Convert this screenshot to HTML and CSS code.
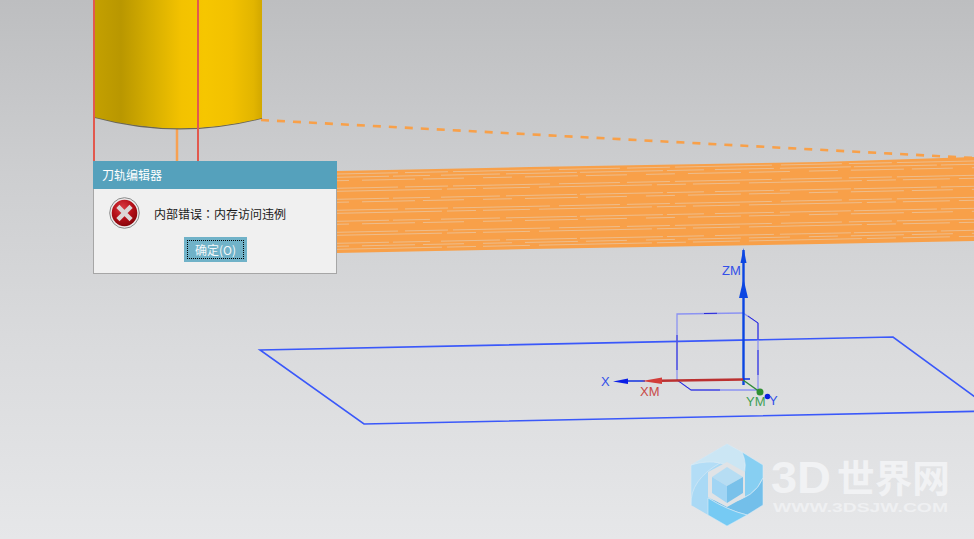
FILE: index.html
```html
<!DOCTYPE html>
<html lang="zh">
<head>
<meta charset="utf-8">
<title>刀轨编辑器</title>
<link rel="stylesheet" href="styles.css">
</head>
<body>
<main class="stage">
  <svg class="scene" width="974" height="539" viewBox="0 0 974 539" xmlns="http://www.w3.org/2000/svg">
    <defs>
      <linearGradient id="cyl" x1="94" x2="262" y1="0" y2="0" gradientUnits="userSpaceOnUse">
        <stop offset="0" stop-color="#c4a000"/>
        <stop offset="0.16" stop-color="#b99700"/>
        <stop offset="0.34" stop-color="#d6ae00"/>
        <stop offset="0.52" stop-color="#f3c200"/>
        <stop offset="0.66" stop-color="#f6c600"/>
        <stop offset="0.82" stop-color="#f2c100"/>
        <stop offset="0.95" stop-color="#e2b500"/>
        <stop offset="1" stop-color="#d2a800"/>
      </linearGradient>
    </defs>

    <!-- tool path band -->
    <polygon class="band" points="337,171 530,167 820,162 974,157 974,241 820,244 530,249 337,253"/>
    <path class="band-lines bl-a" d="M337 174L974 161M337 188.300L974 175.300M337 210.300L974 197.300M337 232.300L974 219.300"/>
    <path class="band-lines bl-b" d="M337 177.300L974 164.300M337 199.300L974 186.300M337 221.300L974 208.300M337 243.300L974 230.300"/>
    <path class="band-lines bl-c" d="M337 191.300L974 178.300M337 213.300L974 200.300M337 235.300L974 222.300M337 249.300L974 236.300"/>
    <path class="band-lines bl-d" d="M337 180.700L974 167.700M337 202.300L974 189.300M337 224.300L974 211.300M337 246.300L974 233.300"/>

    <!-- dashed tool path -->
    <line class="dash" x1="261" y1="120" x2="974" y2="158"/>
    <line class="lead" x1="177" y1="128" x2="177" y2="161"/>

    <!-- cutter -->
    <path class="cyl-shadow" d="M94 117Q178 140 262 118"/>
    <path class="cyl" d="M94 0H262V118Q178 139 94 117Z"/>
    <line class="edge" x1="94" y1="0" x2="94" y2="161"/>
    <line class="edge" x1="198" y1="0" x2="198" y2="161"/>

    <!-- work plane -->
    <polygon class="plane" points="260,350 893,337 994,411 364,424"/>

    <!-- MCS box -->
    <path class="box" d="M677 314L743 313L758 323V390H691L677 380V314Z"/>
    <path class="box-dark" d="M677 335V370M704 313.500L717 313.300M748 316L758 323V340M758 350V375M691 390H720M677 380L691 390"/>

    <!-- triad -->
    <line class="axis-z" x1="743.500" y1="385" x2="743.500" y2="250"/>
    <polygon class="head-z" points="743.500,248 746.500,263 740.500,263"/>
    <polygon class="head-z" points="743.500,279 748,298 739,298"/>
    <line class="axis-y" x1="743" y1="380" x2="760" y2="392"/>
    <line class="axis-x" x1="628" y1="381" x2="645" y2="381"/>
    <polygon class="head-x" points="613,381.500 628,378.500 628,384"/>
    <line class="axis-xm" x1="660" y1="380.700" x2="743" y2="379.500"/>
    <polygon class="head-xm" points="642,381 662,377.500 662,384"/>
    <path class="axis-tick" d="M743 379H750"/>
    <circle class="ball-g" cx="760" cy="392" r="3.500"/>
    <circle class="ball-b" cx="767.500" cy="396.500" r="2.800"/>
    <text class="lbl lbl-blue" x="722" y="275">ZM</text>
    <text class="lbl lbl-blue" x="601" y="386">X</text>
    <text class="lbl lbl-red" x="640" y="396">XM</text>
    <text class="lbl lbl-green" x="746" y="406">YM</text>
    <text class="lbl lbl-blue" x="769" y="405">Y</text>

    <!-- watermark logo -->
    <polygon class="lg-base" points="727,444 763,465 763,505 727,526 691,505 691,465"/>
    <path class="lg-blade lg-f" d="M691 465L691 505Q690 480 720 463Q705 458 691 465Z"/>
    <path class="lg-blade lg-a" d="M691 465L727 444L742 452Q748 465 743 477Q723 455 691 465Z"/>
    <path class="lg-blade lg-b" d="M742 452L763 465V478Q755 498 728 503L743 477Q748 465 742 452Z"/>
    <path class="lg-blade lg-c" d="M763 478V505L747 515Q727 510 708 498L728 503Q755 498 763 478Z"/>
    <path class="lg-blade lg-d" d="M708 498Q727 510 747 515L727 526L708 515Z"/>
    <polygon class="lg-ring" points="727,462 745,472 745,497 727,507 708,497 708,472"/>
    <polygon class="lg-c-top" points="727,467 743,477 727,486 712,477"/>
    <polygon class="lg-c-left" points="712,477 727,486 727,503 712,493"/>
    <polygon class="lg-c-right" points="743,477 743,493 727,503 727,486"/>
    <text class="lg-en" x="771" y="493" textLength="60" lengthAdjust="spacingAndGlyphs">3D</text>
    <text class="lg-cn" x="837" y="492" textLength="113" lengthAdjust="spacingAndGlyphs">世界网</text>
    <text class="lg-url" x="773" y="512" textLength="175" lengthAdjust="spacingAndGlyphs">WWW.3DSJW.COM</text>
  </svg>

  <section class="dialog">
    <header class="dialog-title">刀轨编辑器</header>
    <div class="dialog-body">
      <div class="dialog-msg">
        <svg class="err-icon" width="31" height="32" viewBox="0 0 31 32" xmlns="http://www.w3.org/2000/svg">
          <defs>
            <radialGradient id="err" cx="0.42" cy="0.3" r="0.8">
              <stop offset="0" stop-color="#d93a42"/>
              <stop offset="0.5" stop-color="#b40f18"/>
              <stop offset="1" stop-color="#7a0207"/>
            </radialGradient>
          </defs>
          <ellipse cx="15.500" cy="16" rx="14.800" ry="15.300" fill="#ececec" stroke="#8a8a8a" stroke-width="1"/>
          <ellipse cx="15.500" cy="16" rx="12.800" ry="13.200" fill="url(#err)"/>
          <path d="M10.500 11L20.500 21M20.500 11L10.500 21" stroke="#dcd6d6" stroke-width="4.500" stroke-linecap="square" fill="none"/>
        </svg>
        <p class="msg-text" lang="zh-TW">内部错误：内存访问违例</p>
      </div>
      <div class="dialog-actions">
        <button class="ok-btn" type="button"><span class="ok-inner">确定(O)</span></button>
      </div>
    </div>
  </section>
</main>
</body>
</html>
```

FILE: styles.css
```css
html, body {
  margin: 0;
  padding: 0;
}

body {
  width: 974px;
  height: 539px;
  overflow: hidden;
  font-family: "Noto Sans CJK SC", "Liberation Sans", sans-serif;
}

.stage {
  position: relative;
  width: 974px;
  height: 539px;
  background: linear-gradient(180deg, #bdbec0 0%, #cdced0 32%, #d9dadc 62%, #e6e7e9 100%);
  overflow: hidden;
}

.scene {
  display: block;
}

/* band */
.band { fill: #f8a049; }
.band-lines {
  fill: none;
  stroke: #e6d0ba;
  stroke-width: 0.900;
  opacity: 0.65;
}
.bl-a { stroke-dasharray: 61 7 43 5 97 9; }
.bl-b { stroke-dasharray: 83 4 37 11 59 6 71 3; stroke-dashoffset: 31; }
.bl-c { stroke-dasharray: 47 9 113 5 29 7; stroke-dashoffset: 64; }
.bl-d { stroke-dasharray: 29 13 53 8 41 19; stroke-dashoffset: 17; }
.dash {
  stroke: #f8a049;
  stroke-width: 2.600;
  stroke-dasharray: 8 8;
}
.lead { stroke: #f7a152; stroke-width: 2.500; }

/* cutter */
.cyl { fill: url(#cyl); }
.cyl-shadow { fill: none; stroke: #6a6658; stroke-width: 1.400; }
.edge { stroke: #e2594e; stroke-width: 2; }

/* plane and box */
.plane { fill: none; stroke: #3a58fa; stroke-width: 1.600; }
.box { fill: none; stroke: #8c93f2; stroke-width: 1.300; }
.box-dark { fill: none; stroke: #2a2ad8; stroke-width: 1; }

/* triad */
.axis-z { stroke: #0b46e2; stroke-width: 2.400; }
.head-z { fill: #0b46e2; }
.axis-y { stroke: #2d8a3a; stroke-width: 1.500; }
.axis-x { stroke: #1030e0; stroke-width: 1.500; }
.head-x { fill: #0a1ee6; }
.axis-xm { stroke: #bb3030; stroke-width: 2.400; }
.head-xm { fill: #d23d3a; }
.axis-tick { stroke: #0b2ee2; stroke-width: 1.500; fill: none; }
.ball-g { fill: #2f8f33; }
.ball-b { fill: #0a1ee0; }

.lbl {
  font-family: "Liberation Sans", sans-serif;
  font-size: 13px;
}
.lbl-blue { fill: #3350e8; }
.lbl-red { fill: #c84a48; }
.lbl-green { fill: #3f9f55; }

/* logo */
.lg-base { fill: #a9d9f5; }
.lg-blade { stroke: #dcebf5; stroke-width: 0.600; }
.lg-a { fill: #cbe6f4; }
.lg-b { fill: #87cff2; }
.lg-c { fill: #73bfea; }
.lg-d { fill: #76caf3; }
.lg-f { fill: #b3ddf6; }
.lg-ring { fill: #e0e3e6; }
.lg-c-top { fill: #b6ddf3; }
.lg-c-left { fill: #a1d5f4; }
.lg-c-right { fill: #79c1ea; }
.lg-en {
  font-family: "Liberation Sans", sans-serif;
  font-weight: 700;
  font-size: 45px;
  fill: #f1f2f4;
}
.lg-cn {
  font-family: "Noto Sans CJK SC", sans-serif;
  font-weight: 700;
  font-size: 38px;
  fill: #f1f2f4;
}
.lg-url {
  font-family: "Liberation Sans", sans-serif;
  font-weight: 700;
  font-size: 12.500px;
  fill: #eff0f2;
}

/* dialog */
.dialog {
  position: absolute;
  left: 93px;
  top: 161px;
  width: 244px;
  height: 113px;
  box-sizing: border-box;
  display: flex;
  flex-direction: column;
  background: #f0f0f0;
  border: 1px solid #a6a6a6;
  border-top: 0;
}

.dialog-title {
  flex: 0 0 28px;
  margin: 0 -1px;
  padding-left: 9px;
  background: #55a1bc;
  color: #ffffff;
  font-size: 12px;
  line-height: 28px;
}

.dialog-body {
  flex: 1;
  display: flex;
  flex-direction: column;
  padding: 7px 0 10px 15px;
}

.dialog-msg {
  display: flex;
  align-items: center;
  height: 34px;
}

.err-icon {
  flex: none;
  margin-right: 14px;
}

.msg-text {
  margin: 0;
  color: #1a1a1a;
  font-family: "Noto Sans CJK TC", "Noto Sans CJK SC", sans-serif;
  font-size: 12px;
  line-height: 18px;
  position: relative;
  top: 1px;
}

.dialog-actions {
  display: flex;
  padding: 7px 0 0 75px;
}

.ok-btn {
  width: 63px;
  height: 25px;
  padding: 3px;
  border: 0;
  background: #70b2c8;
  font-family: inherit;
  font-size: 12px;
  color: #f2f7f9;
}

.ok-inner {
  display: block;
  height: 19px;
  box-sizing: border-box;
  border: 1px dotted #000;
  line-height: 17px;
}
```
